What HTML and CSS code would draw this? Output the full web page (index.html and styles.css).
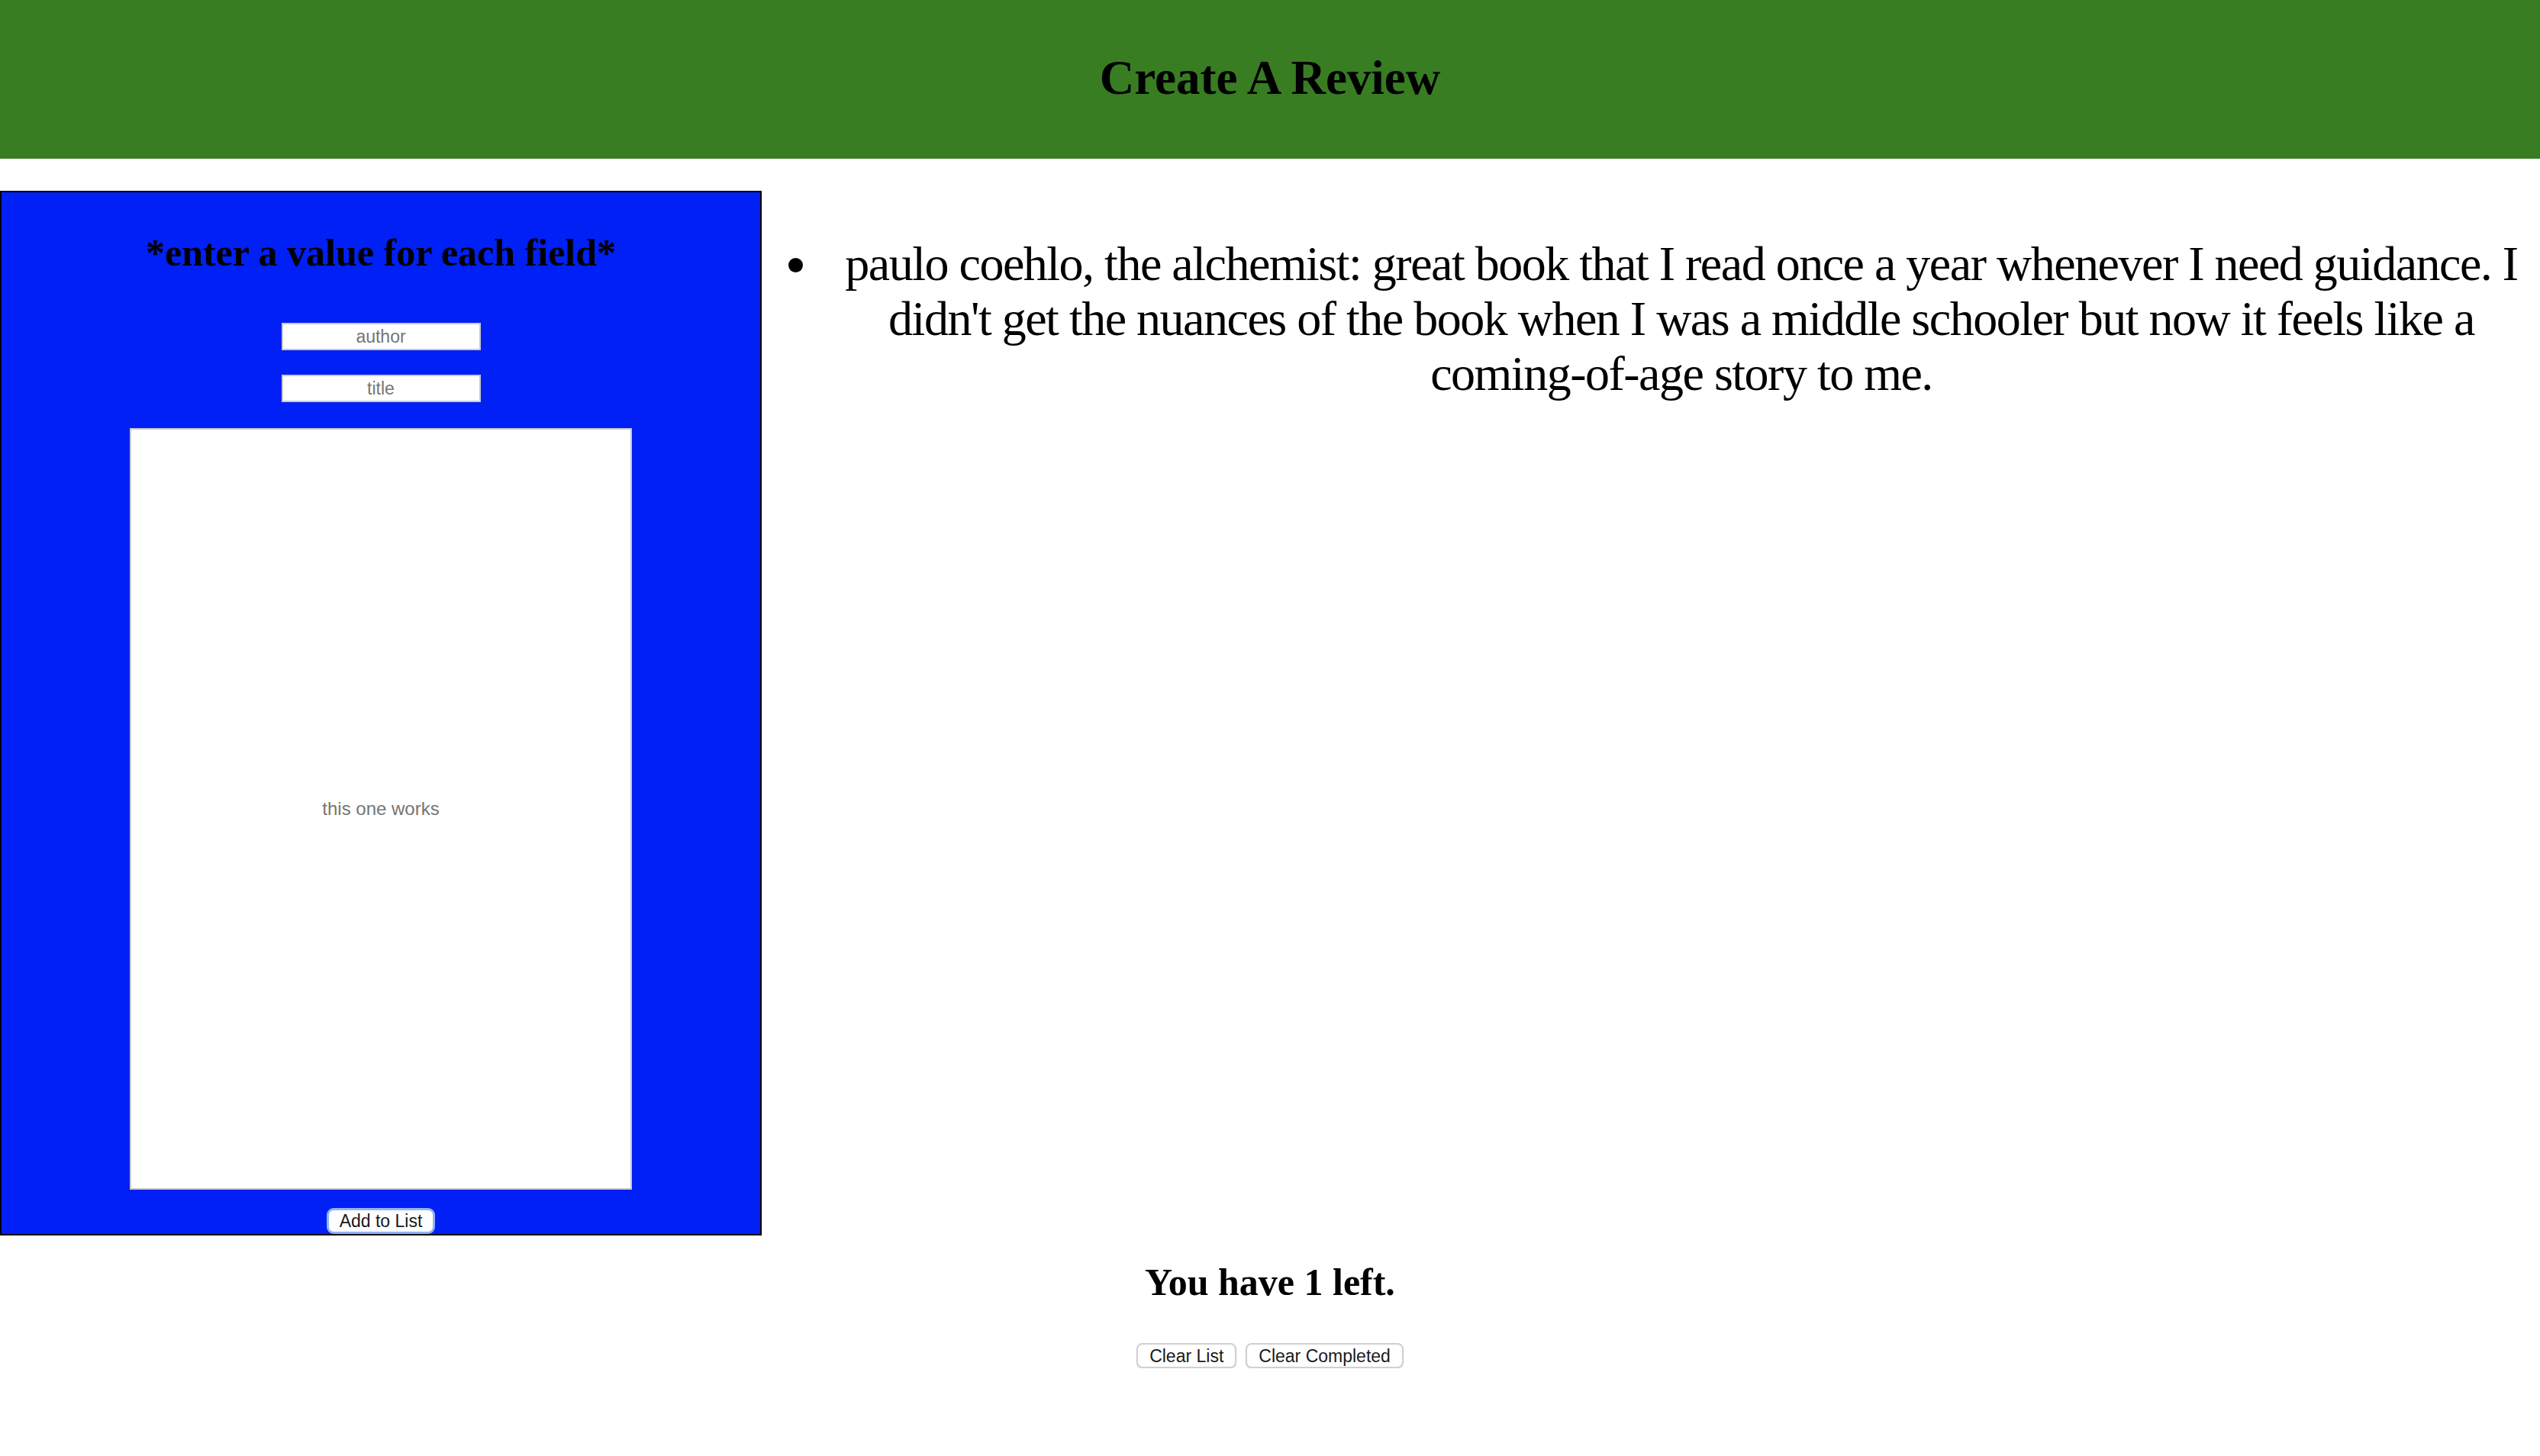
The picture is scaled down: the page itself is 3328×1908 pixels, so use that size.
FILE: index.html
```html
<!DOCTYPE html>
<html lang="en">
<head>
<meta charset="utf-8">
<title>Create A Review</title>
<link rel="stylesheet" href="styles.css">
</head>
<body>
<header class="top">
  <h1 class="top-title">Create A Review</h1>
</header>
<main class="main">
  <section class="form-box">
    <h2 class="form-title">*enter a value for each field*</h2>
    <input class="field" type="text" placeholder="author">
    <input class="field field-title" type="text" placeholder="title">
    <input class="review" type="text" placeholder="this one works">
    <button class="btn btn-add" type="button">Add to List</button>
  </section>
  <ul class="reviews">
    <li class="review-item">paulo coehlo, the alchemist: great book that I read once a year whenever I need guidance. I didn't get the nuances of the book when I was a middle schooler but now it feels like a coming-of-age story to me.</li>
  </ul>
</main>
<h2 class="count">You have 1 left.</h2>
<div class="actions">
  <button class="btn" type="button">Clear List</button>
  <button class="btn" type="button">Clear Completed</button>
</div>
</body>
</html>
```
FILE: styles.css
```css
html, body {
  margin: 0;
  padding: 0;
  background: #ffffff;
  font-family: "Liberation Serif", "Times New Roman", serif;
  color: #000;
}

.top {
  height: 208px;
  background: #387d22;
  display: flex;
  align-items: center;
  justify-content: center;
}

.top-title {
  margin: 0;
  padding-bottom: 5px;
  font-size: 63px;
  line-height: 74px;
  font-weight: bold;
}

.main {
  display: flex;
  align-items: flex-start;
  margin-top: 42px;
}

.form-box {
  box-sizing: border-box;
  width: 998px;
  height: 1369px;
  flex: none;
  background: #0020f5;
  border: 2px solid #000;
  display: flex;
  flex-direction: column;
  align-items: center;
}

.form-title {
  margin: 51px 0 0;
  font-size: 50px;
  line-height: 56px;
  font-weight: bold;
  text-align: center;
}

.field {
  box-sizing: border-box;
  width: 261px;
  height: 36px;
  margin-top: 64px;
  padding: 0 4px;
  border: 2px solid #c9c9c9;
  background: #fff;
  font-family: "Liberation Sans", Arial, sans-serif;
  font-size: 23px;
  text-align: center;
  outline: none;
}

.field-title {
  margin-top: 32px;
}

.review {
  box-sizing: border-box;
  width: 658px;
  height: 998px;
  margin-top: 34px;
  border: 2px solid #c9c9c9;
  background: #fff;
  font-family: "Liberation Sans", Arial, sans-serif;
  font-size: 24px;
  text-align: center;
  outline: none;
}

.field::placeholder,
.review::placeholder {
  color: #757575;
}

.btn {
  box-sizing: border-box;
  height: 34px;
  padding: 0 14px;
  background: #fff;
  border: 2px solid #c8c8c8;
  border-radius: 8px;
  box-shadow: 0 1px 2px rgba(0, 0, 0, 0.12);
  font-family: "Liberation Sans", Arial, sans-serif;
  font-size: 23px;
  line-height: 28px;
  color: #1a1a1a;
}

.btn-add {
  width: 142px;
  margin-top: 24px;
  padding: 0;
  border: 3px solid #8fb2f5;
  border-radius: 9px;
}

.reviews {
  flex: 1;
  margin: 60px 0 0;
  padding: 0 0 0 80px;
  font-size: 64px;
  line-height: 72px;
  letter-spacing: -1.5px;
  text-align: center;
}

.count {
  margin: 33px 0 0;
  font-size: 50px;
  line-height: 56px;
  font-weight: bold;
  text-align: center;
}

.actions {
  display: flex;
  justify-content: center;
  gap: 12px;
  margin-top: 52px;
}

.actions .btn {
  height: 33px;
  padding: 0 15px;
  border-width: 2px;
  border-color: #d0d0d0;
}
```
